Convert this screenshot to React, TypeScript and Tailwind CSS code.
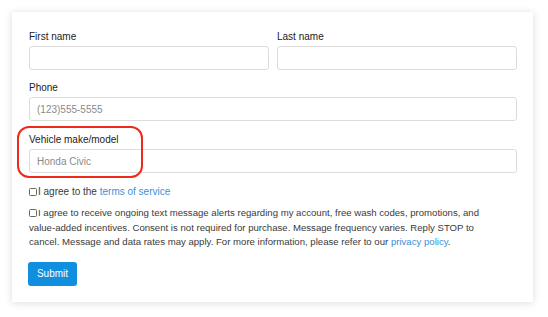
function Field({ label, placeholder }: { label: string; placeholder?: string }) {
  return (
    <div className="flex flex-col">
      <label className="text-[10px] leading-[15px] text-[#222] mb-[2px]">{label}</label>
      <div className="h-[24px] border border-[#dcdcdc] rounded-[3px] bg-white flex items-center px-[7px] text-[10px] text-[#8a8a8a]">
        {placeholder}
      </div>
    </div>
  );
}

function Box() {
  return (
    <span className="inline-block w-[8px] h-[8px] border border-[#666] rounded-[1.5px] bg-white align-[-1px] mr-[1px]"></span>
  );
}

export default function App() {
  return (
    <div
      className="w-[548px] h-[317px] bg-white pt-[12px] pl-[12px] text-[#3a3a3a]"
      style={{ fontFamily: "'Liberation Sans', Arial, sans-serif" }}
    >
      <div className="relative w-[521px] h-[290px] bg-white shadow-[0_1px_8px_rgba(0,0,0,0.14)] pt-[17px] pl-[17px] pr-[16px]">
        <div className="grid grid-cols-2 gap-x-[8px]">
          <Field label="First name" />
          <Field label="Last name" />
        </div>
        <div className="mt-[10px]">
          <Field label="Phone" placeholder="(123)555-5555" />
        </div>
        <div className="mt-[11px]">
          <Field label="Vehicle make/model" placeholder="Honda Civic" />
        </div>
        <div className="mt-[12px] text-[10px] leading-[14px]">
          <Box />I agree to the <a className="text-[#3b8fd9]">terms of service</a>
        </div>
        <p className="mt-[7px] text-[9.6px] leading-[14.5px]">
          <Box />I agree to receive ongoing text message alerts regarding my account, free wash codes, promotions, and
          <br />
          value-added incentives. Consent is not required for purchase. Message frequency varies. Reply STOP to
          <br />
          cancel. Message and data rates may apply. For more information, please refer to our{" "}
          <a className="text-[#3b8fd9]">privacy policy</a>.
        </p>
        <button className="mt-[12px] h-[24px] w-[49px] rounded-[3px] bg-[#0f8fde] text-white text-[10px] -ml-[1px]">
          Submit
        </button>
        <div className="absolute left-[5px] top-[114px] w-[126px] h-[52px] border-[2.5px] border-[#ee2a1e] rounded-[12px] pointer-events-none"></div>
      </div>
    </div>
  );
}
